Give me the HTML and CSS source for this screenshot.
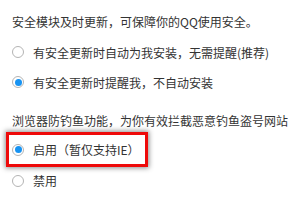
FILE: index.html
```html
<!DOCTYPE html>
<html lang="zh-CN">
<head>
<meta charset="utf-8">
<link rel="stylesheet" href="styles.css">
</head>
<body>
<div class="panel">
  <div class="title t1">安全模块及时更新，可保障你的QQ使用安全。</div>
  <div class="row"><span class="radio"></span><span class="label">有安全更新时自动为我安装，无需提醒(推荐)</span></div>
  <div class="row"><span class="radio on"></span><span class="label">有安全更新时提醒我，不自动安装</span></div>
  <div class="title t2">浏览器防钓鱼功能，为你有效拦截恶意钓鱼盗号网站</div>
  <div class="hl"><div class="row inbox"><span class="radio on"></span><span class="label">启用（暂仅支持IE）</span></div></div>
  <div class="row last"><span class="radio"></span><span class="label">禁用</span></div>
</div>
</body>
</html>
```
FILE: styles.css
```css
html, body {
  margin: 0;
  padding: 0;
  background: #fff;
}
body {
  width: 300px;
  height: 200px;
  overflow: hidden;
  font-family: "Noto Sans CJK SC", "Noto Sans", sans-serif;
  font-size: 12px;
  color: #333;
}
.panel {
  display: flex;
  flex-direction: column;
  padding-top: 7px;
}
.title {
  padding-left: 12px;
  white-space: nowrap;
}
.t1 {
  height: 30px;
  line-height: 30px;
}
.t2 {
  margin-top: 13px;
  height: 22px;
  line-height: 22px;
}
.row {
  display: flex;
  align-items: center;
  height: 30px;
  padding-left: 12px;
  white-space: nowrap;
}
.radio {
  width: 12px;
  height: 12px;
  box-sizing: border-box;
  border: 1px solid #b4b4b4;
  border-radius: 50%;
  background: #fff;
  display: flex;
  align-items: center;
  justify-content: center;
  flex: none;
}
.radio.on::after {
  content: "";
  width: 7px;
  height: 7px;
  border-radius: 50%;
  background: #1793f2;
}
.label {
  margin-left: 9px;
}
.hl {
  margin-left: 6px;
  width: 142px;
  height: 35px;
  box-sizing: border-box;
  border: 3px solid #ee0a0a;
  box-shadow: 0 0 5px 1px rgba(0, 0, 0, 0.45);
  display: flex;
  align-items: center;
}
.row.inbox {
  padding-left: 3px;
  height: 29px;
}
.row.last {
  height: 27px;
}
```
